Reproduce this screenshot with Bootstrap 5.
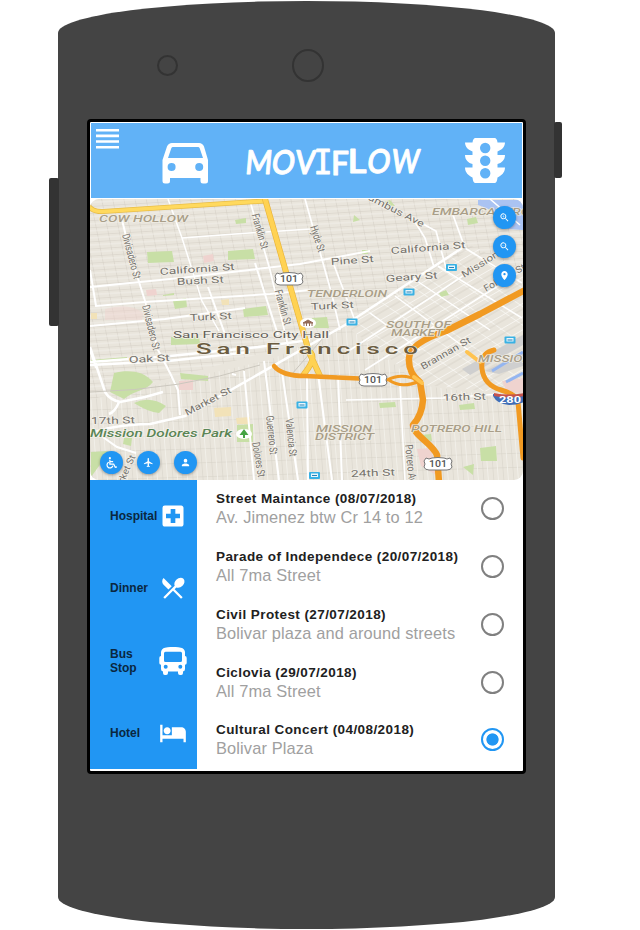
<!DOCTYPE html>
<html lang="en">
<head>
<meta charset="utf-8">
<meta name="viewport" content="width=device-width, initial-scale=1">
<title>Moviflow</title>
<link href="https://cdn.jsdelivr.net/npm/bootstrap@5.3.0/dist/css/bootstrap.min.css" rel="stylesheet">
<style>
  body { font-family: "Liberation Sans", Arial, sans-serif; background: #fff; height: 930px; overflow: hidden; }
  .phone { width: 497px; height: 928px; margin: 1px 0 0 58px; background: #444; border-radius: 50% / 32px; }
  .side-key { background: #333; border-radius: 2px; }
  .key-left { left: -9px; top: 177px; width: 10px; height: 148px; }
  .key-right { right: -7px; top: 121px; width: 8px; height: 56px; }
  .sensors { height: 118px; padding: 48px 0 0 99px; gap: 114px; }
  .lens-s { width: 21px; height: 21px; border: 2px solid #333; margin-top: 6px; }
  .lens-l { width: 32px; height: 33px; border: 2px solid #333; }
  .screen { width: 439px; height: 655px; margin-left: 29px; border: 3px solid #000; border-radius: 4px; background: #fff; padding-top: 1px; }
  .top-bar { height: 75px; margin: 0 1.5px 0 1px; background: #61b2f7; }
  .top-bar svg, .map svg, .side-menu svg { display: block; }
  .map { height: 281px; margin-top: 1px; }
  .map-svg { border-radius: 9px; }
  .fab { width: 23px; height: 23px; background: #2196f3; box-shadow: 0 1px 3px rgba(0,0,0,.35); }
  .fabs-right { top: 7px; right: 7px; gap: 5.500px; }
  .fabs-right .fab:last-child { margin-top: 1px; }
  .fabs-bottom { left: 10px; bottom: 6px; gap: 14px; }
  .lower { height: 290px; }
  .side-menu { width: 106.500px; height: 289px; background: #2196f3; padding-left: 20px; padding-right: 10px; }
  .side-item { height: 72.300px; font-size: 12px; line-height: 14px; font-weight: bold; letter-spacing: 0; color: #0a2740; }
  .side-item .cap { width: 48px; }
  .event { height: 57.850px; padding: 10px 19.500px 0 19.500px; }
  .event-title { font-size: 13.500px; line-height: 18px; font-weight: bold; letter-spacing: .42px; color: #212121; white-space: nowrap; }
  .event-place { font-size: 16.400px; line-height: 18px; color: #a0a0a0; letter-spacing: .13px; white-space: nowrap; }
  .event .form-check-input { width: 23px; height: 23px; margin: 7px 0 0; border: 2.500px solid #808080; background: #fff; flex: none; }
  .event .form-check-input:checked { border-color: #2196f3; background: radial-gradient(circle, #2196f3 0 5.700px, #fff 6.500px); }
</style>
</head>
<body>
<main class="phone position-relative">
  <div class="side-key key-left position-absolute"></div>
  <div class="side-key key-right position-absolute"></div>
  <div class="sensors d-flex align-items-start">
    <div class="lens-s rounded-circle"></div>
    <div class="lens-l rounded-circle"></div>
  </div>
  <section class="screen">
    <header class="top-bar">
      <svg width="430" height="75" viewBox="91 123 430 75" fill="#fff">
        <path d="M96 129h23v2.600H96zM96 134.600h23v2.600H96zM96 140.200h23v2.600H96zM96 145.900h23v2.600H96z"/>
        <path fill-rule="evenodd" d="M172 143H199Q202.500 143 204 146.500L208 160V181Q208 183.500 205.500 183.500H203Q200.500 183.500 200.500 181V178H170V181Q170 183.500 167.500 183.500H165Q162.500 183.500 162.500 181V160L167 146.500Q168.500 143 172 143ZM173 147Q171.800 147 171.300 148.200L168 158H203L199.700 148.200Q199.200 147 198 147ZM167.600 167a4 4 0 1 0 8 0 4 4 0 1 0-8 0ZM195.200 167a4 4 0 1 0 8 0 4 4 0 1 0-8 0Z"/>
        <g font-family="Lato, sans-serif" font-size="33" font-weight="600" stroke="#fff" stroke-width=".9" stroke-linejoin="round">
          <text transform="translate(244.500 174) skewX(-5)" textLength="27" lengthAdjust="spacingAndGlyphs">M</text>
          <text transform="translate(270.500 173.500) skewX(-8)" textLength="23" lengthAdjust="spacingAndGlyphs">O</text>
          <text transform="translate(294.500 173.500) skewX(-5)" textLength="20" lengthAdjust="spacingAndGlyphs">V</text>
          <text transform="translate(313.500 173.500)" font-family="DejaVu Sans Mono, monospace" font-weight="400" textLength="19" lengthAdjust="spacingAndGlyphs">I</text>
          <text transform="translate(331 174.500)" textLength="18" lengthAdjust="spacingAndGlyphs">F</text>
          <text transform="translate(347.500 173)" textLength="19" lengthAdjust="spacingAndGlyphs">L</text>
          <text transform="translate(366 173) skewX(-8)" textLength="23" lengthAdjust="spacingAndGlyphs">O</text>
          <text transform="translate(390.500 173) skewX(-6)" textLength="28" lengthAdjust="spacingAndGlyphs">W</text>
        </g>
        <path fill-rule="evenodd" d="M475.500 138H494.500Q497 138 497.500 142.500H505C505 147 501.500 150 497.500 151.500V155H505C505 160 501.500 163 497.500 164V167.500H505C505 172.500 501.500 175.500 497.500 177.500Q497 183 494.500 183H475.500Q473 183 472.500 177.500C468.500 175.500 465 172.500 465 167.500H472.500V164C468.500 163 465 160 465 155H472.500V151.500C468.500 150 465 147 465 142.500H472.500Q473 138 475.500 138ZM480 148a5.200 5.200 0 1 0 10.400 0 5.200 5.200 0 1 0-10.400 0ZM480 160.700a5.200 5.200 0 1 0 10.400 0 5.200 5.200 0 1 0-10.400 0ZM480 173.300a5.200 5.200 0 1 0 10.400 0 5.200 5.200 0 1 0-10.400 0Z"/>
      </svg>
    </header>

    <div class="map position-relative overflow-hidden">
      <svg class="map-svg" width="433" height="281" viewBox="90 199 433 281">
        <defs>
          <pattern id="gNorth" width="11" height="7" patternUnits="userSpaceOnUse" patternTransform="matrix(1 -.06 .2 1 90 199)"><path d="M0 0H11M0 0V7" stroke="#d3cec4" stroke-width="1" fill="none"/><path d="M0 3.500H11" stroke="#f3f0eb" stroke-width=".8"/></pattern>
          <pattern id="gSouth" width="10" height="14" patternUnits="userSpaceOnUse" patternTransform="matrix(1 -.03 .08 1 90 199)"><path d="M0 0H10M0 0V14" stroke="#d5d0c6" stroke-width=".9" fill="none"/><path d="M5 0V14" stroke="#f5f3ee" stroke-width=".7"/></pattern>
          <pattern id="gSoma" width="17" height="13" patternUnits="userSpaceOnUse" patternTransform="matrix(.86 -.5 .8 .55 340 330)"><path d="M0 0H17M0 0V13" stroke="#fbfaf7" stroke-width="1.300" fill="none"/><path d="M0 6H17" stroke="#d5d0c7" stroke-width=".8"/></pattern>
          <g id="stop"><rect x="-5.500" y="-3.500" width="11" height="7" rx="1" fill="#39b1e4"/><path d="M-3.500-2H3.500V1.500H-3.500Z" fill="#e8f6fc"/><path d="M-2.500 0H2.500" stroke="#2782b8"/></g>
          <g id="us101"><path d="M-12-6Q-9-4-6-6Q0-7 6-6Q9-4 12-6L14-3Q12 0 14 3Q13 6 9 6H-9Q-13 6-14 3Q-12 0-14-3Z" fill="#fff" stroke="#777" stroke-width="1"/><text y="3.300" text-anchor="middle" font-size="9" font-weight="500" fill="#555" textLength="18" lengthAdjust="spacingAndGlyphs">101</text></g>
        </defs>
        <rect x="90" y="199" width="433" height="281" fill="#e9e5dc"/>
        <path d="M90 199H420L470 250L330 335L90 400Z" fill="url(#gNorth)"/>
        <path d="M90 400L270 360L345 325L420 385L523 400V480H90Z" fill="url(#gSouth)"/>
        <path d="M420 199H523V270L470 250Z" fill="url(#gNorth)"/>
        <path d="M345 325L470 245L523 270V395L425 385Z" fill="url(#gSoma)"/>
        <g fill="#c8dfa6">
          <path d="M147 252L172 251 174 262 148 263ZM228 251L253 249 255 259 228 260ZM173 301L186 298 187 307 175 309ZM163 295L174 293V295L163 296ZM243 309L266 306 268 315 244 317ZM312 318L327 317 329 328 314 328ZM171 337L199 336 200 344 171 345ZM91 360L127 357V360L91 363ZM114 373C127 370 143 370 153 382C146 391 135 390 124 399L110 392ZM134 403Q150 395 166 406L159 413Q148 412 134 403ZM180 373L208 376V381L181 379ZM124 438L132 438 131 446 123 444ZM91 452L108 451 99 466 91 477ZM237 425L253 424V442H237ZM379 403L395 402 396 407 380 408ZM459 405L474 403 475 409 460 410ZM480 448L496 446 497 461 481 461ZM420 435L431 434 432 441 424 440ZM467 219L476 217 478 223 468 225ZM439 293L446 290 449 295 441 297ZM362 250H368V254H362ZM354 215L360 220 353 222ZM384 202L390 200 395 206 388 207ZM235 220L246 218V223L236 224ZM463 467L474 464 473 475Z"/>
        </g>
        <path d="M203 256L213 254 214 261 204 263ZM146 290L156 289 157 295 147 296ZM179 381L193 380V390H179ZM502 381L523 378V393L507 392ZM417 449L431 448 436 475 421 466Z" fill="#efd3cf"/>
        <path d="M105 309Q130 302 143 313L142 320 105 320Z" fill="#efd3cf" opacity=".45"/>
        <path d="M221 300L229 299V305H222ZM214 408L231 407V416L215 417ZM236 418L250 417V424H237ZM91 313H97V319H91Z" fill="#f2e2b8"/>
        <path d="M478 200H523V230L508 229Q503 213 478 205Z" fill="#aac3f2"/>
        <path d="M462 369L523 335V345L470 375ZM485 371L523 352V366L499 374Z" fill="#cfcfcf"/>
        <path d="M492 371L523 352M506 382L523 373" stroke="#94b5f0" stroke-width="3"/>

        <g fill="none" stroke="#fff" stroke-width="2">
          <path d="M121 216L131 256 145 301 158 350 170 373 178 390 180 415"/>
          <path d="M168 199L182 238 202 301 219 331M182 238L235 234 310 229" stroke-width="1.500"/>
          <path d="M90 270L96 306 145 302 270 294 310 290M90 287L180 278 300 264 370 251M255 263L278 335M208 287L226 337M90 326L165 319 245 308"/>
          <path d="M90 362L170 356 258 347 310 340M90 365L168 361 250 352M90 347L105 392Q110 400 120 402L145 397 163 392M119 402Q115 412 109 414M90 434Q110 425 150 424L185 416 345 325 465 246" stroke-width="2.500"/>
          <path d="M100 435L117 447 136 453M232 374L236 375M244 371L254 480M264 361L279 480M282 372L298 480M318 374L332 480M338 375L342 480M307 377L308 480M90 350L96 368"/>
          <path d="M250 201L270 270 289 350M305 199L332 295 340 330M334 265L354 318M453 215L465 248M412 217L425 238 434 267M423 224L436 231 446 268M346 400L443 398 500 394" stroke-width="1.700"/>
          <path d="M395 296L468 350M417 281L490 330M438 266L522 318M370 313L420 350M465 248L522 283M490 199L520 225M350 350L430 298 500 251M365 370L460 310 523 270M400 385L405 480" stroke-width="1.500"/>
          <path d="M90 392Q180 390 260 365M292 374L330 330" stroke="#cbc7be" stroke-width="1"/>
        </g>
        <g fill="none" stroke-linejoin="round" stroke-linecap="round">
          <path d="M88 205Q92 212 103 211.500L264 201" stroke="#e8bd48" stroke-width="5"/>
          <path d="M88 205Q92 212 103 211.500L264 201" stroke="#ffd95d" stroke-width="3.500"/>
          <path d="M265 199L288 279 309 352 320 376M311 353Q316 359 304 374" stroke="#eab63c" stroke-width="6"/>
          <path d="M265 199L288 279 309 352 320 376M311 353Q316 359 304 374" stroke="#ffd253" stroke-width="4.600"/>
          <path d="M274 366Q282 376 305 376L370 379" stroke="#f19a22" stroke-width="4.500"/>
          <path d="M525 290L480 314 446 331Q410 343 409 358T420 382L423 400Q422 415 413 425C414 436 432 443 437 455L439 482" stroke="#f19a22" stroke-width="6.500"/>
          <path d="M387 380Q402 372 420 381Q401 389 389 380" stroke="#f19a22" stroke-width="3"/>
          <path d="M494 350Q480 353 482 369T501 390 518 402L523 458" stroke="#f19a22" stroke-width="5"/>
          <path d="M467 352L480 362M414 377L422 383" stroke="#ffc34f" stroke-width="4"/>
        </g>

        <g font-family="Roboto, sans-serif" font-size="9.500" fill="#75726c" stroke="#f4f1ea" stroke-width="1.400" paint-order="stroke" stroke-linejoin="round">
          <g font-size="11">
          <text transform="translate(122 235) rotate(75)" textLength="46" lengthAdjust="spacingAndGlyphs">Divisadero St</text>
          <text transform="translate(142 306) rotate(76)" textLength="46" lengthAdjust="spacingAndGlyphs">Divisadero St</text>
          <text transform="translate(251.500 215) rotate(74)" textLength="36" lengthAdjust="spacingAndGlyphs">Franklin St</text>
          <text transform="translate(274.500 291) rotate(74)" textLength="36" lengthAdjust="spacingAndGlyphs">Franklin St</text>
          <text transform="translate(310 227) rotate(72)" textLength="27" lengthAdjust="spacingAndGlyphs">Hyde St</text>
          <text transform="translate(266 416) rotate(84)" textLength="39" lengthAdjust="spacingAndGlyphs">Guerrero St</text>
          <text transform="translate(285.500 419) rotate(84)" textLength="38" lengthAdjust="spacingAndGlyphs">Valencia St</text>
          <text transform="translate(252 443) rotate(80)" textLength="35" lengthAdjust="spacingAndGlyphs">Dolores St</text>
          <text transform="translate(405 445) rotate(84)" textLength="42" lengthAdjust="spacingAndGlyphs">Potrero Ave</text>
          </g>
          <text transform="translate(160 275) rotate(-4)" textLength="75" lengthAdjust="spacingAndGlyphs">California St</text>
          <text transform="translate(177 285) rotate(-3)" textLength="47" lengthAdjust="spacingAndGlyphs">Bush St</text>
          <text transform="translate(190 321) rotate(-3)" textLength="42" lengthAdjust="spacingAndGlyphs">Turk St</text>
          <text transform="translate(331 265) rotate(-4)" textLength="43" lengthAdjust="spacingAndGlyphs">Pine St</text>
          <text transform="translate(311 310) rotate(-3)" textLength="43" lengthAdjust="spacingAndGlyphs">Turk St</text>
          <text transform="translate(351 191) rotate(27)" textLength="80" lengthAdjust="spacingAndGlyphs">Columbus Ave</text>
          <text transform="translate(391 254) rotate(-4.500)" textLength="75" lengthAdjust="spacingAndGlyphs">California St</text>
          <text transform="translate(386 282) rotate(-4)" textLength="52" lengthAdjust="spacingAndGlyphs">Geary St</text>
          <text transform="translate(464 278) rotate(-32)" textLength="42" lengthAdjust="spacingAndGlyphs">Mission</text>
          <text transform="translate(486 292) rotate(-30)" textLength="46" lengthAdjust="spacingAndGlyphs">Folsom St</text>
          <text transform="translate(129 363) rotate(-3)" textLength="41" lengthAdjust="spacingAndGlyphs">Oak St</text>
          <text transform="translate(187 416) rotate(-28)" textLength="51" lengthAdjust="spacingAndGlyphs">Market St</text>
          <text transform="translate(118 496) rotate(-66)" textLength="43" lengthAdjust="spacingAndGlyphs">Market St</text>
          <text transform="translate(91 424) rotate(-1)" textLength="44" lengthAdjust="spacingAndGlyphs">17th St</text>
          <text transform="translate(351 477) rotate(-2)" textLength="44" lengthAdjust="spacingAndGlyphs">24th St</text>
          <text transform="translate(423 370) rotate(-30)" textLength="56" lengthAdjust="spacingAndGlyphs">Brannan St</text>
          <text transform="translate(443 401) rotate(-2)" textLength="43" lengthAdjust="spacingAndGlyphs">16th St</text>
          <text x="173" y="338" fill="#625d57" textLength="156" lengthAdjust="spacingAndGlyphs">San Francisco City Hall</text>
          <text x="90" y="437" font-size="10" font-weight="500" font-style="italic" fill="#5b8556" textLength="142" lengthAdjust="spacingAndGlyphs">Mission Dolores Park</text>
        </g>
        <g font-family="Roboto, sans-serif" font-size="8.800" font-weight="500" font-style="italic" fill="#a99e88" stroke="#f1eee6" stroke-width="1.200" paint-order="stroke">
          <text x="99" y="221.500" textLength="89" lengthAdjust="spacingAndGlyphs">COW HOLLOW</text>
          <text x="307" y="296.500" textLength="80" lengthAdjust="spacingAndGlyphs">TENDERLOIN</text>
          <text x="432" y="215" textLength="98" lengthAdjust="spacingAndGlyphs">EMBARCADERO</text>
          <text x="386" y="327.500" textLength="65" lengthAdjust="spacingAndGlyphs">SOUTH OF</text>
          <text x="391" y="335.500" textLength="52" lengthAdjust="spacingAndGlyphs">MARKET</text>
          <text x="316" y="432" textLength="56" lengthAdjust="spacingAndGlyphs">MISSION</text>
          <text x="315" y="440" textLength="59" lengthAdjust="spacingAndGlyphs">DISTRICT</text>
          <text x="478" y="362" textLength="54" lengthAdjust="spacingAndGlyphs">MISSION</text>
          <text x="411" y="432" textLength="91" lengthAdjust="spacingAndGlyphs">POTRERO HILL</text>
        </g>
        <text transform="translate(196 353.500) scale(1.720 1)" font-family="Roboto, sans-serif" font-size="15" font-weight="500" fill="#6a5b40" stroke="#f4f1ea" stroke-width="1" paint-order="stroke" textLength="129">San Francisco</text>

        <g font-family="Roboto, sans-serif">
          <use href="#us101" x="289" y="279"/><use href="#us101" x="373" y="380"/><use href="#us101" x="438" y="464"/>
          <path d="M493 394Q509 397 524 394V402Q517 405 509 405Q497 404 493 396Z" fill="#416eb6"/>
          <path d="M494 393Q509 396 524 393V396Q509 399 494 396Z" fill="#c6544e"/>
          <text x="499" y="402.500" fill="#fff" font-size="8.500" font-weight="bold" textLength="22" lengthAdjust="spacingAndGlyphs">280</text>
        </g>
        <use href="#stop" x="352" y="322"/><use href="#stop" x="409" y="292"/><use href="#stop" x="451.500" y="267.500"/><use href="#stop" x="302" y="405"/><use href="#stop" x="314.500" y="475.500"/><use href="#stop" x="510" y="340"/>
        <ellipse cx="308" cy="323" rx="8" ry="5" fill="#fff"/><path d="M303 323L308 320 313 323ZM304 323V326M306.500 323V326M309.500 323V326M312 323V326" stroke="#946b59" fill="#946b59"/>
        <ellipse cx="244" cy="434" rx="8" ry="5" fill="#fff"/><path d="M244 429L248.500 435H245V438H243V435H239.500Z" fill="#45a342"/>
      </svg>
      <div class="fabs-right position-absolute d-flex flex-column">
        <button class="fab btn p-0 border-0 rounded-circle d-flex align-items-center justify-content-center" aria-label="Zoom in"><svg width="11" height="11" viewBox="0 0 24 24" fill="#fff"><path d="M15.500 14h-.8l-.3-.3A6.500 6.500 0 1 0 13.700 14.400l.3.300v.8l5 5 1.500-1.500zM9.500 14a4.500 4.500 0 1 1 0-9 4.500 4.500 0 0 1 0 9zM9 7h1v2h2v1h-2v2H9v-2H7V9h2z"/></svg></button>
        <button class="fab btn p-0 border-0 rounded-circle d-flex align-items-center justify-content-center" aria-label="Zoom out"><svg width="11" height="11" viewBox="0 0 24 24" fill="#fff"><path d="M15.500 14h-.8l-.3-.3A6.500 6.500 0 1 0 13.700 14.400l.3.300v.8l5 5 1.500-1.500zM9.500 14a4.500 4.500 0 1 1 0-9 4.500 4.500 0 0 1 0 9zM7 9h5v1H7z"/></svg></button>
        <button class="fab btn p-0 border-0 rounded-circle d-flex align-items-center justify-content-center" aria-label="My place"><svg width="11" height="11" viewBox="0 0 24 24" fill="#fff"><path d="M12 2C8.130 2 5 5.130 5 9c0 5.250 7 13 7 13s7-7.750 7-13c0-3.870-3.130-7-7-7zm0 9.500a2.500 2.500 0 0 1 0-5 2.500 2.500 0 0 1 0 5z"/></svg></button>
      </div>
      <div class="fabs-bottom position-absolute d-flex">
        <button class="fab btn p-0 border-0 rounded-circle d-flex align-items-center justify-content-center" aria-label="Accessible routes"><svg width="13" height="13" viewBox="0 0 24 24" fill="none" stroke="#fff" stroke-width="2.200"><circle cx="9" cy="4" r="2" fill="#fff" stroke="none"/><path d="M9 7V15H16L19 21L22 20M9 10.500H15M7 11.500A5.500 5.500 0 1 0 14.500 18"/></svg></button>
        <button class="fab btn p-0 border-0 rounded-circle d-flex align-items-center justify-content-center" aria-label="Airport"><svg width="11" height="11" viewBox="0 0 24 24" fill="#fff"><path d="M21 16v-2l-8-5V3.500a1.500 1.500 0 0 0-3 0V9l-8 5v2l8-2.500V19l-2 1.500V22l3.500-1 3.500 1v-1.500L13 19v-5.500z"/></svg></button>
        <button class="fab btn p-0 border-0 rounded-circle d-flex align-items-center justify-content-center" aria-label="Profile"><svg width="11" height="11" viewBox="0 0 24 24" fill="#fff"><path d="M12 12a4 4 0 1 0 0-8 4 4 0 0 0 0 8zm0 2c-2.670 0-8 1.340-8 4v2h16v-2c0-2.660-5.330-4-8-4z"/></svg></button>
      </div>
    </div>

    <div class="lower d-flex">
      <nav class="side-menu">
        <div class="side-item d-flex align-items-center justify-content-between"><span class="cap">Hospital</span><svg width="28" height="28" viewBox="0 0 24 24" fill="#fff"><path d="M19 3H5a2 2 0 0 0-2 2v14c0 1.100.9 2 2 2h14c1.100 0 2-.9 2-2V5c0-1.100-.9-2-2-2zm-1 11h-4v4h-4v-4H6v-4h4V6h4v4h4v4z"/></svg></div>
        <div class="side-item d-flex align-items-center justify-content-between"><span class="cap">Dinner</span><svg width="28" height="28" viewBox="0 0 24 24" fill="#fff"><path d="M8.100 13.340l2.830-2.830L3.910 3.500a4.008 4.008 0 0 0 0 5.660l4.190 4.180zm6.780-1.810c1.530.71 3.680.21 5.270-1.380 1.910-1.910 2.280-4.650.81-6.120-1.460-1.460-4.200-1.100-6.120.81-1.590 1.590-2.090 3.740-1.380 5.270L3.700 19.870l1.410 1.410L12 14.410l6.880 6.880 1.410-1.410L13.410 13l1.470-1.470z"/></svg></div>
        <div class="side-item d-flex align-items-center justify-content-between"><span class="cap">Bus<br>Stop</span><svg width="28" height="28" viewBox="0 0 28 28" fill="#fff"><path fill-rule="evenodd" d="M6 .8Q14-1 22 .8Q25.500 1.700 26 5V9Q27.700 9.200 27.700 11V16Q27.700 17.500 26 17.700V22Q26 24 24 24.500V26Q24 28 22.200 28H21Q19 28 19 26V24.500H9V26Q9 28 7 28H5.800Q4 28 4 26V24.500Q2 24 2 22V17.700Q.3 17.500.3 16V11Q.3 9.200 2 9V5Q2.500 1.700 6 .8ZM6.500 4.700Q5 4.700 5 6.200V13.500Q5 15 6.500 15H21.500Q23 15 23 13.500V6.200Q23 4.700 21.500 4.700ZM4.700 19.800a2 2 0 1 0 4 0 2 2 0 1 0-4 0ZM19.300 19.800a2 2 0 1 0 4 0 2 2 0 1 0-4 0Z"/></svg></div>
        <div class="side-item d-flex align-items-center justify-content-between"><span class="cap">Hotel</span><svg width="28" height="28" viewBox="0 0 24 24" fill="#fff"><path d="M7 13c1.660 0 3-1.340 3-3S8.660 7 7 7s-3 1.340-3 3 1.340 3 3 3zm12-6h-8v7H3V5H1v15h2v-3h18v3h2v-9c0-2.210-1.790-4-4-4z"/></svg></div>
      </nav>
      <div class="flex-grow-1">
        <label class="event d-flex justify-content-between"><span><span class="event-title d-block">Street Maintance (08/07/2018)</span><span class="event-place d-block">Av. Jimenez btw Cr 14 to 12</span></span><input class="form-check-input" type="radio" name="event"></label>
        <label class="event d-flex justify-content-between"><span><span class="event-title d-block">Parade of Independece (20/07/2018)</span><span class="event-place d-block">All 7ma Street</span></span><input class="form-check-input" type="radio" name="event"></label>
        <label class="event d-flex justify-content-between"><span><span class="event-title d-block">Civil Protest (27/07/2018)</span><span class="event-place d-block">Bolivar plaza and around streets</span></span><input class="form-check-input" type="radio" name="event"></label>
        <label class="event d-flex justify-content-between"><span><span class="event-title d-block">Ciclovia (29/07/2018)</span><span class="event-place d-block">All 7ma Street</span></span><input class="form-check-input" type="radio" name="event"></label>
        <label class="event d-flex justify-content-between"><span><span class="event-title d-block">Cultural Concert (04/08/2018)</span><span class="event-place d-block">Bolivar Plaza</span></span><input class="form-check-input" type="radio" name="event" checked></label>
      </div>
    </div>
  </section>
</main>
<script src="https://cdn.jsdelivr.net/npm/bootstrap@5.3.0/dist/js/bootstrap.bundle.min.js"></script>
</body>
</html>
